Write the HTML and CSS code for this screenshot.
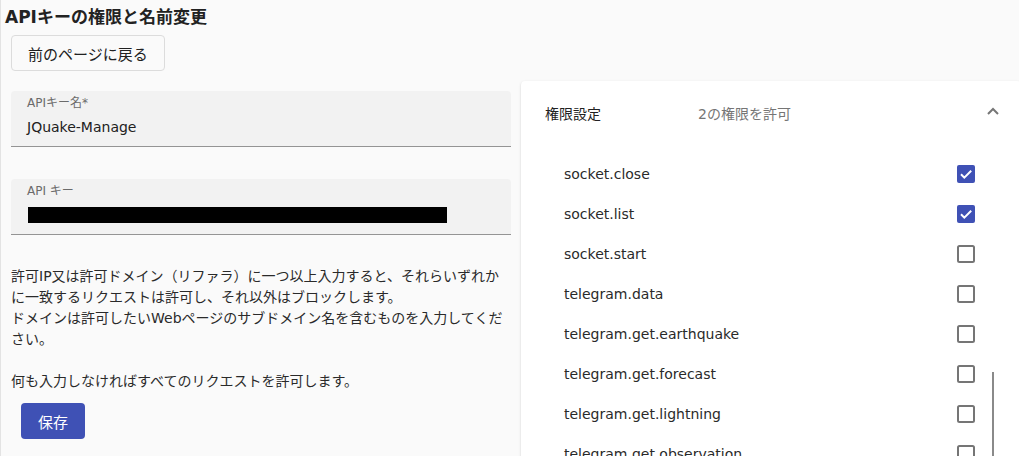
FILE: index.html
```html
<!DOCTYPE html>
<html lang="ja">
<head>
<meta charset="utf-8">
<title>APIキーの権限と名前変更</title>
<link rel="stylesheet" href="styles.css">
</head>
<body>
<div class="page">
  <h1 class="title">APIキーの権限と名前変更</h1>
  <button class="back-btn" type="button">前のページに戻る</button>
  <div class="main">
    <div class="left">
      <div class="field">
        <div class="field-label">APIキー名*</div>
        <div class="field-value">JQuake-Manage</div>
      </div>
      <div class="field field-gap">
        <div class="field-label">API キー</div>
        <div class="field-value"><span class="redact"></span></div>
      </div>
      <p class="note">許可IP又は許可ドメイン（リファラ）に一つ以上入力すると、それらいずれかに一致するリクエストは許可し、それ以外はブロックします。<br>ドメインは許可したいWebページのサブドメイン名を含むものを入力してください。<br><br>何も入力しなければすべてのリクエストを許可します。</p>
      <button class="save-btn" type="button">保存</button>
    </div>
    <div class="card">
      <div class="card-head">
        <span class="card-title">権限設定</span>
        <span class="card-desc">2の権限を許可</span>
        <svg class="chev" width="12" height="8" viewBox="0 0 12 8"><polyline points="1,7 6,2 11,7" fill="none" stroke="#767676" stroke-width="2"/></svg>
      </div>
      <ul class="perm-list">
        <li class="perm"><span>socket.close</span><svg class="cb" width="18" height="18" viewBox="0 0 18 18"><rect x="0" y="0" width="18" height="18" rx="2" fill="#3f51b5"/><path d="M4 9.3l3.3 3.3L14.2 5.8" fill="none" stroke="#fff" stroke-width="2"/></svg></li>
        <li class="perm"><span>socket.list</span><svg class="cb" width="18" height="18" viewBox="0 0 18 18"><rect x="0" y="0" width="18" height="18" rx="2" fill="#3f51b5"/><path d="M4 9.3l3.3 3.3L14.2 5.8" fill="none" stroke="#fff" stroke-width="2"/></svg></li>
        <li class="perm"><span>socket.start</span><svg class="cb" width="18" height="18" viewBox="0 0 18 18"><rect x="1" y="1" width="16" height="16" rx="1.5" fill="none" stroke="#757575" stroke-width="2"/></svg></li>
        <li class="perm"><span>telegram.data</span><svg class="cb" width="18" height="18" viewBox="0 0 18 18"><rect x="1" y="1" width="16" height="16" rx="1.5" fill="none" stroke="#757575" stroke-width="2"/></svg></li>
        <li class="perm"><span>telegram.get.earthquake</span><svg class="cb" width="18" height="18" viewBox="0 0 18 18"><rect x="1" y="1" width="16" height="16" rx="1.5" fill="none" stroke="#757575" stroke-width="2"/></svg></li>
        <li class="perm"><span>telegram.get.forecast</span><svg class="cb" width="18" height="18" viewBox="0 0 18 18"><rect x="1" y="1" width="16" height="16" rx="1.5" fill="none" stroke="#757575" stroke-width="2"/></svg></li>
        <li class="perm"><span>telegram.get.lightning</span><svg class="cb" width="18" height="18" viewBox="0 0 18 18"><rect x="1" y="1" width="16" height="16" rx="1.5" fill="none" stroke="#757575" stroke-width="2"/></svg></li>
        <li class="perm"><span>telegram.get.observation</span><svg class="cb" width="18" height="18" viewBox="0 0 18 18"><rect x="1" y="1" width="16" height="16" rx="1.5" fill="none" stroke="#757575" stroke-width="2"/></svg></li>
        <li class="perm"><span>telegram.get.tsunami</span><svg class="cb" width="18" height="18" viewBox="0 0 18 18"><rect x="1" y="1" width="16" height="16" rx="1.5" fill="none" stroke="#757575" stroke-width="2"/></svg></li>
      </ul>
      <div class="scroll-ind"></div>
    </div>
  </div>
</div>
</body>
</html>
```
FILE: styles.css
```css
html, body {
  margin: 0;
  padding: 0;
  height: 456px;
  overflow: hidden;
  background: #fafafa;
}
body {
  font-family: "DejaVu Sans", "Noto Sans CJK JP", sans-serif;
  color: #212121;
}
.page {
  border-left: 1px solid #e3e3e3;
  padding: 5px 0 0 4px;
  min-height: 456px;
  box-sizing: border-box;
  width: 1030px;
}
.title {
  margin: 0 0 6px 0;
  font-size: 17px;
  line-height: 24px;
  font-weight: bold;
  color: #222;
}
.back-btn {
  display: block;
  margin-left: 6px;
  height: 36px;
  padding: 0 16px;
  background: #fafafa;
  border: 1px solid #dcdcdc;
  border-radius: 4px;
  font-family: "DejaVu Sans", "Noto Sans CJK JP", sans-serif;
  font-size: 15px;
  color: #212121;
}
.main {
  display: flex;
  gap: 10px;
  margin-top: 10px;
  margin-left: 6px;
  align-items: flex-start;
}
.left {
  width: 500px;
  flex: none;
  padding-top: 10px;
}
.field {
  background: #f2f2f2;
  border-radius: 4px 4px 0 0;
  border-bottom: 1px solid #949494;
  padding: 4px 16px 9px;
  height: 42px;
}
.field-gap {
  margin-top: 32px;
}
.field-label {
  font-size: 12px;
  line-height: 16px;
  color: #6b6b6b;
}
.field-value {
  margin-top: 6px;
  font-size: 14px;
  line-height: 20px;
  color: #212121;
  display: flex;
  align-items: center;
  height: 20px;
}
.redact {
  display: block;
  width: 419px;
  height: 16px;
  background: #000;
  margin-left: 1px;
}
.note {
  margin: 31px 0 0 0;
  font-size: 14px;
  line-height: 21px;
  color: #2a2a2a;
}
.save-btn {
  display: block;
  margin: 11px 0 0 10px;
  height: 36px;
  padding: 0 17px;
  background: #3f51b5;
  border: none;
  border-radius: 4px;
  color: #fff;
  font-family: "DejaVu Sans", "Noto Sans CJK JP", sans-serif;
  font-size: 15px;
}
.card {
  position: relative;
  width: 500px;
  flex: none;
  background: #fff;
  border-radius: 4px;
  box-shadow: 0 2px 1px -1px rgba(0,0,0,.2), 0 1px 1px 0 rgba(0,0,0,.14), 0 1px 3px 0 rgba(0,0,0,.12);
  height: 420px;
  overflow: hidden;
}
.card-head {
  display: flex;
  align-items: center;
  height: 64px;
  padding: 0 22px 0 24px;
  font-size: 14px;
}
.card-title {
  width: 153px;
  flex: none;
  color: #212121;
}
.card-desc {
  flex: 1;
  color: #757575;
}
.chev {
  display: block;
  margin-top: -4px;
}
.perm-list {
  list-style: none;
  margin: 0;
  padding: 9px 46px 0 43px;
}
.perm {
  display: flex;
  align-items: center;
  justify-content: space-between;
  height: 40px;
  font-size: 14px;
  color: #2a2a2a;
}
.cb {
  display: block;
  flex: none;
}
.scroll-ind {
  position: absolute;
  left: 471px;
  top: 291px;
  width: 2px;
  height: 200px;
  background: #8a8a8a;
}
```
